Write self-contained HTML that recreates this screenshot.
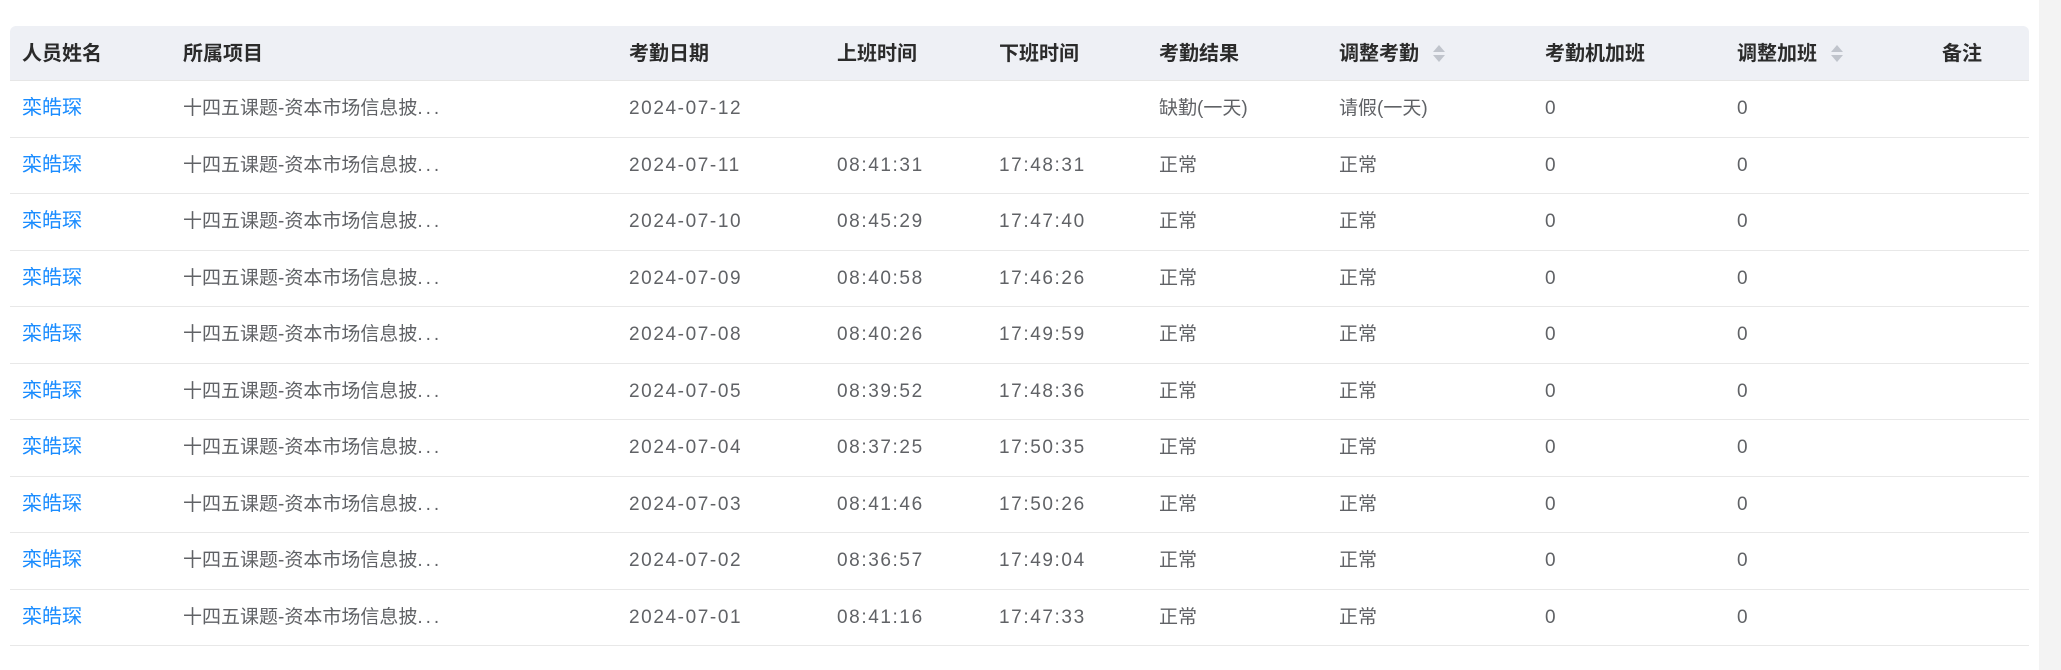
<!DOCTYPE html>
<html><head><meta charset="utf-8"><style>
html,body{margin:0;padding:0;background:#fff;width:2061px;height:670px;overflow:hidden;font-family:"Liberation Sans","Noto Sans CJK SC",sans-serif;}
.sb{position:absolute;left:2039px;top:0;width:22px;height:670px;background:#f3f3f3;}
.tbl{position:absolute;left:10px;top:26px;width:2019px;}
.hd{height:55px;background:#eef0f5;border-radius:6px 6px 0 0;position:relative;border-bottom:1px solid #e6e6e6;box-sizing:border-box;}
.row{height:56.5px;position:relative;border-bottom:1px solid #e8e8e8;box-sizing:border-box;}
.c{position:absolute;top:0;line-height:55px;font-size:19px;color:#606266;white-space:nowrap;}
.hd .c{font-weight:bold;color:#2b2b2b;line-height:56px;font-size:20px;}
.d{letter-spacing:1.6px;}
.e{letter-spacing:3px;}
.n{color:#1a8cff;font-size:20px;}
.s{display:inline-block;position:relative;width:12px;height:18px;margin-left:14px;vertical-align:-3px;}
.s:before{content:"";position:absolute;left:0;top:0;border:6px solid transparent;border-bottom:7px solid #c0c4cc;border-top:0;}
.s:after{content:"";position:absolute;left:0;top:10px;border:6px solid transparent;border-top:7px solid #c0c4cc;border-bottom:0;}
</style></head><body>
<div class="sb"></div>
<div class="tbl">
<div class="hd">
<span class="c" style="left:12px">人员姓名</span>
<span class="c" style="left:173px">所属项目</span>
<span class="c" style="left:619px">考勤日期</span>
<span class="c" style="left:827px">上班时间</span>
<span class="c" style="left:989px">下班时间</span>
<span class="c" style="left:1149px">考勤结果</span>
<span class="c" style="left:1329px">调整考勤<i class="s"></i></span>
<span class="c" style="left:1535px">考勤机加班</span>
<span class="c" style="left:1727px">调整加班<i class="s"></i></span>
<span class="c" style="left:1932px">备注</span>
</div>
</div>
<div class="tbl" style="top:81px">
<div class="row"><span class="c n" style="left:12px">栾皓琛</span><span class="c" style="left:173px">十四五课题-资本市场信息披<span class="e">...</span></span><span class="c d" style="left:619px">2024-07-12</span><span class="c" style="left:1149px">缺勤(一天)</span><span class="c" style="left:1329px">请假(一天)</span><span class="c" style="left:1535px">0</span><span class="c" style="left:1727px">0</span></div>
<div class="row"><span class="c n" style="left:12px">栾皓琛</span><span class="c" style="left:173px">十四五课题-资本市场信息披<span class="e">...</span></span><span class="c d" style="left:619px">2024-07-11</span><span class="c d" style="left:827px">08:41:31</span><span class="c d" style="left:989px">17:48:31</span><span class="c" style="left:1149px">正常</span><span class="c" style="left:1329px">正常</span><span class="c" style="left:1535px">0</span><span class="c" style="left:1727px">0</span></div>
<div class="row"><span class="c n" style="left:12px">栾皓琛</span><span class="c" style="left:173px">十四五课题-资本市场信息披<span class="e">...</span></span><span class="c d" style="left:619px">2024-07-10</span><span class="c d" style="left:827px">08:45:29</span><span class="c d" style="left:989px">17:47:40</span><span class="c" style="left:1149px">正常</span><span class="c" style="left:1329px">正常</span><span class="c" style="left:1535px">0</span><span class="c" style="left:1727px">0</span></div>
<div class="row"><span class="c n" style="left:12px">栾皓琛</span><span class="c" style="left:173px">十四五课题-资本市场信息披<span class="e">...</span></span><span class="c d" style="left:619px">2024-07-09</span><span class="c d" style="left:827px">08:40:58</span><span class="c d" style="left:989px">17:46:26</span><span class="c" style="left:1149px">正常</span><span class="c" style="left:1329px">正常</span><span class="c" style="left:1535px">0</span><span class="c" style="left:1727px">0</span></div>
<div class="row"><span class="c n" style="left:12px">栾皓琛</span><span class="c" style="left:173px">十四五课题-资本市场信息披<span class="e">...</span></span><span class="c d" style="left:619px">2024-07-08</span><span class="c d" style="left:827px">08:40:26</span><span class="c d" style="left:989px">17:49:59</span><span class="c" style="left:1149px">正常</span><span class="c" style="left:1329px">正常</span><span class="c" style="left:1535px">0</span><span class="c" style="left:1727px">0</span></div>
<div class="row"><span class="c n" style="left:12px">栾皓琛</span><span class="c" style="left:173px">十四五课题-资本市场信息披<span class="e">...</span></span><span class="c d" style="left:619px">2024-07-05</span><span class="c d" style="left:827px">08:39:52</span><span class="c d" style="left:989px">17:48:36</span><span class="c" style="left:1149px">正常</span><span class="c" style="left:1329px">正常</span><span class="c" style="left:1535px">0</span><span class="c" style="left:1727px">0</span></div>
<div class="row"><span class="c n" style="left:12px">栾皓琛</span><span class="c" style="left:173px">十四五课题-资本市场信息披<span class="e">...</span></span><span class="c d" style="left:619px">2024-07-04</span><span class="c d" style="left:827px">08:37:25</span><span class="c d" style="left:989px">17:50:35</span><span class="c" style="left:1149px">正常</span><span class="c" style="left:1329px">正常</span><span class="c" style="left:1535px">0</span><span class="c" style="left:1727px">0</span></div>
<div class="row"><span class="c n" style="left:12px">栾皓琛</span><span class="c" style="left:173px">十四五课题-资本市场信息披<span class="e">...</span></span><span class="c d" style="left:619px">2024-07-03</span><span class="c d" style="left:827px">08:41:46</span><span class="c d" style="left:989px">17:50:26</span><span class="c" style="left:1149px">正常</span><span class="c" style="left:1329px">正常</span><span class="c" style="left:1535px">0</span><span class="c" style="left:1727px">0</span></div>
<div class="row"><span class="c n" style="left:12px">栾皓琛</span><span class="c" style="left:173px">十四五课题-资本市场信息披<span class="e">...</span></span><span class="c d" style="left:619px">2024-07-02</span><span class="c d" style="left:827px">08:36:57</span><span class="c d" style="left:989px">17:49:04</span><span class="c" style="left:1149px">正常</span><span class="c" style="left:1329px">正常</span><span class="c" style="left:1535px">0</span><span class="c" style="left:1727px">0</span></div>
<div class="row"><span class="c n" style="left:12px">栾皓琛</span><span class="c" style="left:173px">十四五课题-资本市场信息披<span class="e">...</span></span><span class="c d" style="left:619px">2024-07-01</span><span class="c d" style="left:827px">08:41:16</span><span class="c d" style="left:989px">17:47:33</span><span class="c" style="left:1149px">正常</span><span class="c" style="left:1329px">正常</span><span class="c" style="left:1535px">0</span><span class="c" style="left:1727px">0</span></div>
</div>
</body></html>
